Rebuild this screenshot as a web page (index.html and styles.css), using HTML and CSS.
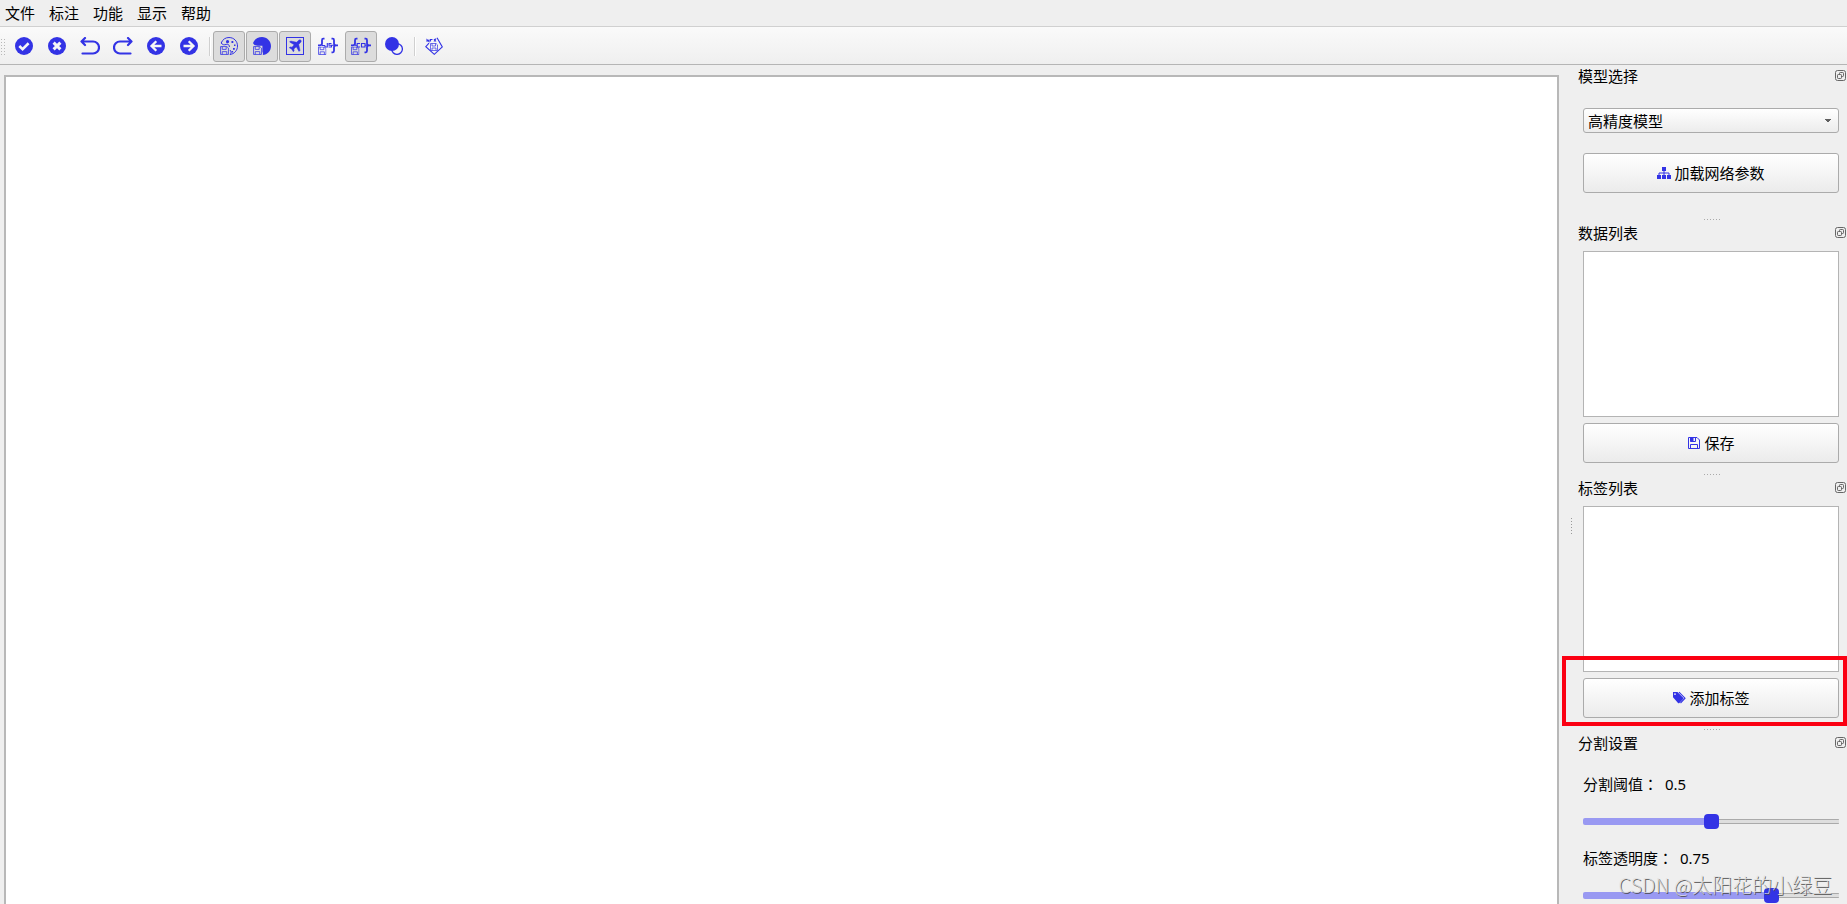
FILE: index.html
```html
<!DOCTYPE html>
<html lang="zh-CN">
<head>
<meta charset="utf-8">
<title>标注工具</title>
<link rel="stylesheet" href="styles.css">
</head>
<body>
<svg class="defs" aria-hidden="true">
  <symbol id="float" viewBox="0 0 12 12"><g fill="none" stroke="#666" stroke-width="1"><rect x=".5" y=".5" width="10" height="10" rx="2"/><rect x="4.500" y="2.500" width="4" height="4" rx=".8"/><rect x="2.500" y="4.500" width="4" height="4" rx=".8" fill="#efefef"/></g></symbol>
  <symbol id="disk" viewBox="0 0 8 8"><path d="M.5.5h5.600l1.400 1.400v5.600h-7zM2 .5v2.500h3.500v-2.500M2 7.500v-2.500h4v2.500" fill="none" stroke="currentColor" stroke-width=".7"/></symbol>
  <symbol id="braces" viewBox="0 0 20 18"><path d="M6.500 1.700H5.200Q4 1.700 4 3.200V6.500Q4 8.300 1.500 8.300H0M13.500 1.700h1.300q1.200 0 1.200 1.500V6.500q0 1.800 2.500 1.800h1.500-1.500q-2.500 0-2.500 1.800v3.700q0 1.500-1.200 1.500H13.500" fill="none" stroke="currentColor" stroke-width="1.800"/></symbol>
</svg>
<nav class="menubar">
  <button class="menu">文件</button>
  <button class="menu">标注</button>
  <button class="menu">功能</button>
  <button class="menu">显示</button>
  <button class="menu">帮助</button>
</nav>
<div class="toolbar" role="toolbar">
  <span class="grip"></span>
  <button class="tool" aria-label="完成"><svg viewBox="0 0 18 18"><circle cx="9" cy="9" r="9" fill="currentColor"/><path d="M4.300 9l3.300 3.200 6-5.900" fill="none" stroke="#f6f6f6" stroke-width="2.600"/></svg></button>
  <button class="tool" aria-label="清除"><svg viewBox="0 0 18 18"><circle cx="9" cy="9" r="9" fill="currentColor"/><path d="M5.600 5.600l6.800 6.800M12.400 5.600l-6.800 6.800" stroke="#f6f6f6" stroke-width="3"/></svg></button>
  <button class="tool" aria-label="撤销"><svg class="wide" viewBox="0 0 20 18"><path d="M5 1L1.500 4.500 5 8M1.500 4.500h11.500a6 6 0 0 1 0 12H2.500" fill="none" stroke="currentColor" stroke-width="2.200" stroke-linecap="round" stroke-linejoin="round"/></svg></button>
  <button class="tool" aria-label="重做"><svg class="wide" viewBox="0 0 20 18"><path d="M15 1L18.500 4.500 15 8M18.500 4.500H7a6 6 0 0 0 0 12H17.500" fill="none" stroke="currentColor" stroke-width="2.200" stroke-linecap="round" stroke-linejoin="round"/></svg></button>
  <button class="tool" aria-label="上一张"><svg viewBox="0 0 18 18"><circle cx="9" cy="9" r="9" fill="currentColor"/><path d="M9.300 4.200L4.500 9l4.800 4.800M4.700 9H14.500" fill="none" stroke="#f6f6f6" stroke-width="2.300"/></svg></button>
  <button class="tool" aria-label="下一张"><svg viewBox="0 0 18 18"><circle cx="9" cy="9" r="9" fill="currentColor"/><path d="M8.700 4.200L13.500 9l-4.800 4.800M13.300 9H3.500" fill="none" stroke="#f6f6f6" stroke-width="2.300"/></svg></button>
  <span class="separator"></span>
  <button class="tool" aria-pressed="true" aria-label="保存伪彩色图"><svg viewBox="0 0 18 18"><path d="M1.200 6C2.600 2.300 5.600.5 9 .5c5 0 8.500 3.800 8.500 8.500 0 4.500-3.300 8-7.500 8.500 1.600-1.600 1.500-3.200-.2-4.500M1.200 6c1 1.800 3.200 2.200 5 1.400 2.200-.6 3.400.8 3.200 2.600" fill="none" stroke="currentColor"/><path d="M7.500 3a1.600 1.600 0 1 1 .1 3.200A1.600 1.600 0 0 1 7.500 3zM11.500 4h1.800v2h-1.800zM14 7.500h1.500v1.600H14zM13 11h1.800v1.800H13zM11.600 14h1.500v1.500h-1.500z" fill="currentColor"/><use href="#disk" y="9" width="9" height="9"/></svg></button>
  <button class="tool" aria-pressed="true" aria-label="保存灰度图"><svg viewBox="0 0 18 18"><path d="M0 6C1.500 2.200 5 0 9 0c5 0 9 4 9 9s-3.500 8.700-8.300 9c.5-1 .3-2.200-.3-3.200V8.700H4.500C2 8.700.5 7.600 0 6z" fill="currentColor"/><use href="#disk" y="9" width="9" height="9"/></svg></button>
  <button class="tool" aria-pressed="true" aria-label="保存抠图"><svg viewBox="0 0 18 18"><rect x=".5" y=".5" width="17" height="17" fill="none" stroke="currentColor"/><path d="M14.800 3.200c-.7-.7-1.700-.4-2.400.3L10.600 5.300 4.600 4 3.600 5l4.600 2.700L6 10.200l-1.900-.3-.8.800 2.500 1.500 1.500 2.500.8-.8-.3-1.900 2.500-2.200 2.700 4.600 1-1-1.300-6 1.800-1.800c.7-.7 1-1.700.3-2.400z" fill="currentColor" stroke="currentColor" stroke-width=".5"/></svg></button>
  <button class="tool" aria-label="保存 JSON"><svg class="wide" viewBox="0 0 20 18"><use href="#braces" width="20" height="18"/><path d="M4 8.500h3M9.300 6v4H7V8.500M13.500 6.500h-2.500v1.700h2.500V10h-3M13.500 8.200h3" fill="none" stroke="currentColor" stroke-width="1.100"/><use href="#disk" y="9.500" width="8.500" height="8.500"/></svg></button>
  <button class="tool" aria-pressed="true" aria-label="保存 COCO"><svg class="wide" viewBox="0 0 20 18"><use href="#braces" width="20" height="18"/><path d="M9 6.500H6.200V10H9M4 8.300h2M10.500 6.500H14V10h-3.500zM14 8.300h2" fill="none" stroke="currentColor" stroke-width="1.100"/><use href="#disk" y="9.500" width="8.500" height="8.500"/></svg></button>
  <button class="tool" aria-label="最大连通块"><svg viewBox="0 0 18 18"><circle cx="12" cy="12" r="5.400" fill="#f4f4f4" stroke="currentColor" stroke-width="1.300"/><circle cx="7" cy="7" r="7" fill="currentColor"/></svg></button>
  <span class="separator"></span>
  <button class="tool" aria-label="另存为"><svg viewBox="0 0 18 18"><g fill="none" stroke="currentColor" stroke-width="1.100"><path d="M12 .8L17.300 10 9.300 17.300.8 9.600 4 6.200"/><path d="M2 4.800V2.800L4 4.500V2.500M5.500 4.500V2.500H7.500M9 4.500L11 1.500M9 2l2 2.500"/></g><use href="#disk" x="5" y="6" width="8" height="8"/></svg></button>
</div>
<div class="workspace">
  <main class="canvas"></main>
  <div class="splitter-v"><span></span></div>
  <aside class="docks">
    <section class="dock">
      <header class="dock-title"><h2>模型选择</h2><button class="float" aria-label="浮动"><svg><use href="#float"/></svg></button></header>
      <div class="dock-body model">
        <select class="combo" aria-label="模型选择"><option>高精度模型</option></select>
        <button class="push"><svg viewBox="0 0 14 14"><path d="M5 1h4v4H5zM0 9h4v4H0zM5 9h4v4H5zM10 9h4v4h-4z" fill="currentColor"/><path d="M7 4v5M2 9.500V7h10v2.500" fill="none" stroke="currentColor"/></svg>加载网络参数</button>
      </div>
    </section>
    <div class="splitter-h"></div>
    <section class="dock">
      <header class="dock-title"><h2>数据列表</h2><button class="float" aria-label="浮动"><svg><use href="#float"/></svg></button></header>
      <div class="dock-body listing">
        <div class="list" role="listbox" aria-label="数据列表"></div>
        <button class="push"><svg viewBox="0 0 14 14"><path d="M1.500 1.500h8.500l2.500 2.500v8.500h-11zM3.500 12.500V8.500h7v4M3.500 2v3.500h5V2" fill="none" stroke="currentColor"/><path d="M3.500 1.500h3v4h-3z" fill="currentColor"/></svg>保存</button>
      </div>
    </section>
    <div class="splitter-h"></div>
    <section class="dock">
      <header class="dock-title"><h2>标签列表</h2><button class="float" aria-label="浮动"><svg><use href="#float"/></svg></button></header>
      <div class="dock-body listing">
        <div class="list" role="listbox" aria-label="标签列表"></div>
        <button class="push"><svg viewBox="0 0 14 14"><path d="M1 1h4.500l5.700 5.700a1 1 0 0 1 0 1.400l-3.800 3.800a1 1 0 0 1-1.400 0L1 6.200zM3 2.200a.9.900 0 1 0 0 1.800.9.900 0 0 0 0-1.800z" fill="currentColor" fill-rule="evenodd"/><path d="M7 1.200l6 6-4.500 4.800" fill="none" stroke="currentColor" stroke-width="1.100"/></svg>添加标签</button>
      </div>
      <div class="highlight"></div>
    </section>
    <div class="splitter-h"></div>
    <section class="dock">
      <header class="dock-title"><h2>分割设置</h2><button class="float" aria-label="浮动"><svg><use href="#float"/></svg></button></header>
      <div class="dock-body settings">
        <label for="threshold">分割阈值<span class="colon" lang="zh-TW">：</span> 0.5</label>
        <input class="slider half" id="threshold" type="range" min="0" max="1" step="0.01" value="0.5">
        <label for="opacity">标签透明度<span class="colon" lang="zh-TW">：</span> 0.75</label>
        <input class="slider three-quarters" id="opacity" type="range" min="0" max="1" step="0.01" value="0.75">
      </div>
    </section>
  </aside>
</div>
<div class="watermark">CSDN @太阳花的小绿豆</div>
</body>
</html>
```
FILE: styles.css
```css
* { box-sizing: border-box; }
body {
  margin: 0;
  height: 100vh;
  display: flex;
  flex-direction: column;
  overflow: hidden;
  position: relative;
  background: #efefef;
  color: #000;
  font: 15px/20px "Noto Sans", "Noto Sans CJK SC", sans-serif;
}
button, select { font: inherit; color: inherit; }
button { padding: 0; border: 0; background: none; }
svg { display: block; }
.defs { position: absolute; width: 0; height: 0; }

.menubar { display: flex; gap: 14px; height: 27px; padding: 0 5px; border-bottom: 1px solid #d0d0d0; flex: none; }
.toolbar {
  display: flex;
  align-items: center;
  gap: 1px;
  height: 38px;
  padding-top: 1px;
  flex: none;
  border-bottom: 1px solid #b5b5b5;
  background: linear-gradient(#fafafa, #efefef);
}
.grip {
  width: 5px;
  height: 17px;
  margin-right: 2px;
  background: radial-gradient(circle, #b8b8b8 35%, transparent 40%) 0 0 / 3px 3px;
}
.tool {
  display: grid;
  place-items: center;
  width: 32px;
  height: 31px;
  border: 1px solid transparent;
  border-radius: 3px;
  color: #3333e5;
}
.tool svg { width: 18px; height: 18px; }
.tool svg.wide { width: 20px; }
.tool[aria-pressed="true"] { background: #dcdcdc; border-color: #ababab; }
.separator { width: 2px; height: 19px; margin: 0 1px 0 3px; border-left: 1px solid #d0d0d0; border-right: 1px solid #fff; }

.workspace { display: flex; flex: 1; min-height: 0; }
.canvas { flex: 1; margin: 10px 0 0 4px; border: 2px solid #b8b8b8; border-bottom: 0; background: #fff; }
.splitter-v { width: 19px; display: grid; place-items: center; padding: 84px 0 0 6px; }
.splitter-v span { width: 1px; height: 17px; background: repeating-linear-gradient(#999 0 1px, transparent 1px 3px); }
.docks { width: 269px; flex: none; }
.dock { position: relative; }
.dock-title { display: flex; align-items: center; justify-content: space-between; height: 22px; }
.dock-title h2 { margin: 0; font: inherit; }
.float svg { width: 12px; height: 12px; }
.dock-body { display: flex; flex-direction: column; padding: 0 8px 0 5px; }
.model { gap: 20px; padding-top: 21px; padding-bottom: 23px; }
.listing { gap: 6px; padding-top: 7px; padding-bottom: 8px; }
.settings { padding-top: 20px; }

.combo {
  appearance: none;
  height: 25px;
  padding: 0 4px;
  border: 1px solid #ababab;
  border-radius: 3px;
  background:
    linear-gradient(to bottom right, #606060 50%, transparent 50%) right 6px center / 4px 4px no-repeat,
    linear-gradient(to bottom left, #606060 50%, transparent 50%) right 10px center / 4px 4px no-repeat,
    linear-gradient(#fff, #ececec);
}
.push {
  display: flex;
  align-items: center;
  justify-content: center;
  gap: 3px;
  height: 40px;
  border: 1px solid #ababab;
  border-radius: 3px;
  background: linear-gradient(#fff, #ebebeb);
}
.push svg { width: 14px; height: 14px; color: #3333e5; }
.list { height: 166px; border: 1px solid #b4b4b4; background: #fff; }
.splitter-h { height: 6px; display: grid; place-items: center; }
.splitter-h::before { content: ""; width: 17px; height: 1px; background: repeating-linear-gradient(90deg, #aaa 0 1px, transparent 1px 3px); }
.highlight { position: absolute; left: -16px; right: 0; bottom: 0; height: 70px; border: 4px solid #fb0012; }

.settings label { height: 20px; white-space: nowrap; }
.colon { margin-right: 3px; font-family: "Noto Sans CJK TC", sans-serif; line-height: 1; }
.slider { appearance: none; width: 100%; height: 16px; margin: 19px 0; background: none; }
.slider::-webkit-slider-runnable-track {
  height: 7px;
  border-radius: 2px;
}
.half::-webkit-slider-runnable-track {
  background: linear-gradient(#9999f2, #9999f2) left / 50% 7px no-repeat, linear-gradient(#aaa 0 1px, #dedede 1px 4px, #aaa 4px) center / 100% 5px no-repeat;
}
.three-quarters::-webkit-slider-runnable-track {
  background: linear-gradient(#9999f2, #9999f2) left / 75% 7px no-repeat, linear-gradient(#aaa 0 1px, #dedede 1px 4px, #aaa 4px) center / 100% 5px no-repeat;
}
.slider::-webkit-slider-thumb { appearance: none; width: 15px; height: 15px; margin-top: -4px; border-radius: 4px; background: #3333e5; }

.watermark {
  position: absolute;
  right: 15px;
  bottom: 5px;
  font: 300 20px/28px "Noto Sans CJK SC", sans-serif;
  color: rgba(225, 225, 225, .8);
  text-shadow: 1px 1px 0 rgba(70, 70, 70, .8);
}
```
